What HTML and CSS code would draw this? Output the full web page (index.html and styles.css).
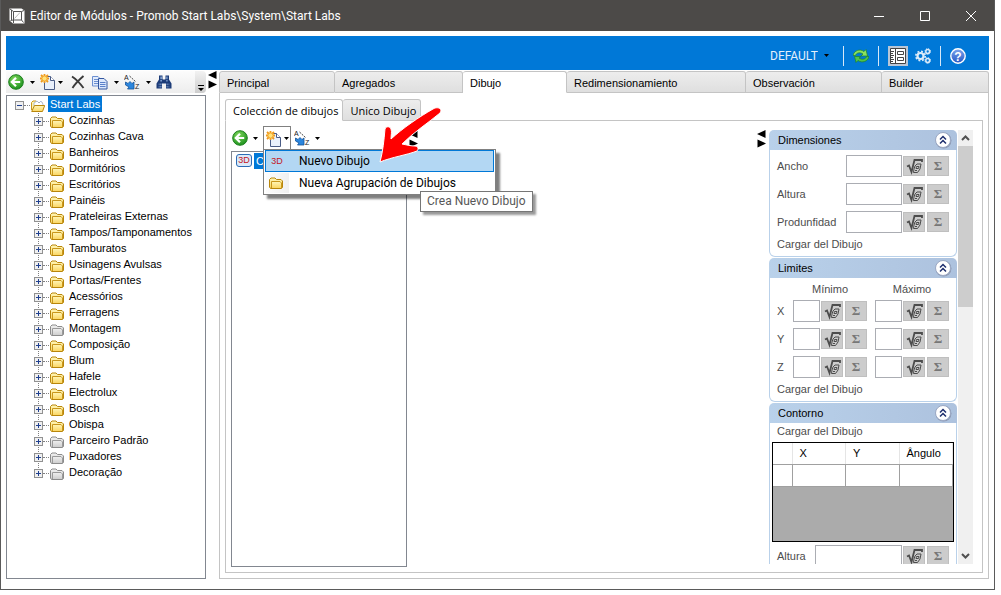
FILE: index.html
```html
<!DOCTYPE html>
<html lang="es">
<head>
    <meta charset="UTF-8">
    <meta name="viewport" content="width=device-width, initial-scale=1.0">
    <title>Editor de Módulos</title>
    <link rel="stylesheet" href="styles.css">
</head>
<body>
    <!-- Shared icons -->
    <svg class="sprite" aria-hidden="true">
        <defs>
            <linearGradient id="gold" x1="0" y1="0" x2="0" y2="1">
                <stop offset="0" stop-color="#fff6b8"/><stop offset="1" stop-color="#fbd765"/>
            </linearGradient>
            <linearGradient id="silver" x1="0" y1="0" x2="0" y2="1">
                <stop offset="0" stop-color="#f0f0f0"/><stop offset="1" stop-color="#cfcfcf"/>
            </linearGradient>
            <radialGradient id="green" cx="0.4" cy="0.3" r="0.7">
                <stop offset="0" stop-color="#7fd65a"/><stop offset="1" stop-color="#1f9420"/>
            </radialGradient>
            <linearGradient id="help-blue" x1="0" y1="0" x2="0" y2="1">
                <stop offset="0" stop-color="#7fa6ee"/><stop offset="1" stop-color="#2456c4"/>
            </linearGradient>
            <linearGradient id="lens" x1="0" y1="0" x2="1" y2="0">
                <stop offset="0" stop-color="#1d3c78"/><stop offset=".45" stop-color="#a9c8f3"/><stop offset="1" stop-color="#1d3c78"/>
            </linearGradient>
        </defs>
        <symbol id="folder" viewBox="0 0 14 12">
            <path d="M.5 10V2.500L2 1h4l1.500 1.500H12L13.500 4v6.500l-1 1h-11z" fill="url(#gold)" stroke="#b8860b"/>
            <path d="M2.500 11V4.500H11L12.500 6v5" fill="url(#gold)" stroke="#c9971c"/>
        </symbol>
        <symbol id="folder-gray" viewBox="0 0 14 12">
            <path d="M.5 10V2.500L2 1h4l1.500 1.500H12L13.500 4v6.500l-1 1h-11z" fill="url(#silver)" stroke="#8c8c8c"/>
            <path d="M2.500 11V4.500H11L12.500 6v5" fill="url(#silver)" stroke="#9a9a9a"/>
        </symbol>
        <symbol id="folder-open" viewBox="0 0 14 12">
            <path d="M.5 10V2.500L2 1h3l1.500 1.500H11V5" fill="#fff3b0" stroke="#c9971c"/>
            <path d="M3 3l3-2 2 2 2-2 2 3v2H3z" fill="#fff" stroke="#8fa4c8" stroke-width=".7"/>
            <path d="M.7 11.500L3.500 5.500h10.200L11.500 11.500z" fill="url(#gold)" stroke="#b8860b"/>
        </symbol>
        <symbol id="back" viewBox="0 0 16 16">
            <circle cx="8" cy="8" r="7.300" fill="url(#green)" stroke="#1c7f1c"/>
            <path d="M8 3.800L3.800 8 8 12.200M4.500 8H12.200" fill="none" stroke="#fff" stroke-width="2.200"/>
        </symbol>
        <symbol id="new" viewBox="0 0 16 16">
            <path d="M4.500 2.500h6l4 4v9h-10z" fill="#e9f0fb" stroke="#4a5c86"/>
            <path d="M10.500 2.500v4h4" fill="#fff" stroke="#4a5c86"/>
            <path d="M4.500 0v9M0 4.500h9M1 1l7 7M8 1L1 8" stroke="#f09a1a" stroke-width="1.800"/>
            <circle cx="4.500" cy="4.500" r="2.600" fill="#ffe27a" stroke="#f5a92c"/>
        </symbol>
        <symbol id="delete" viewBox="0 0 16 16">
            <path d="M2 2.500C6 5 10.500 10 13.500 14M13.500 2C10 5 5 10 2.500 14" fill="none" stroke="#3a3a3a" stroke-width="1.900"/>
        </symbol>
        <symbol id="copy" viewBox="0 0 16 16">
            <path d="M.5 2.500h5.500l2.500 2.500v7h-8z" fill="#e2ecfc" stroke="#6c8fd0"/>
            <path d="M2 5.500h4M2 7.500h4M2 9.500h4" stroke="#6c8fd0"/>
            <path d="M6.500 4.500h5.500l3 3v7.500H6.500z" fill="#dbe7fb" stroke="#33569f"/>
            <path d="M8 8.500h5.500M8 10.500h5.500M8 12.500h5.500" stroke="#5a80c9"/>
        </symbol>
        <symbol id="sort-arrow" viewBox="0 0 16 16">
            <path d="M5.500 2l6.500 6" stroke="#444" stroke-dasharray="2 1"/>
            <path d="M1.500 8L4 9.500l2-2 2 2 2-1.500v7H3.500L5 13 1.500 11z" fill="#2a86de" stroke="#14539a" stroke-width=".8"/>
        </symbol>
        <symbol id="find" viewBox="0 0 16 16">
            <path d="M3 1.500h3.500v4h3v-4H13v4l2.500 4v5H10V9.500H6v5H.5v-5l2.500-4z" fill="#1d3c78"/>
            <path d="M1.500 9.500h4v4h-4zM10.500 9.500h4v4h-4zM4 2.500h2v5H4zM10 2.500h2v5h-2z" fill="url(#lens)"/>
            <path d="M1 11.500h5M10 11.500h5M3.500 5.500h3M9.500 5.500h3" stroke="#1d3c78" stroke-width=".8"/>
        </symbol>
        <symbol id="caret" viewBox="0 0 5 3"><path d="M0 0h5L2.500 3z"/></symbol>
        <symbol id="split" viewBox="0 0 9 18"><path d="M8.500 0v8L0 4zM.5 9.500v8L9 13.500z"/></symbol>
        <symbol id="formula" viewBox="0 0 20 18">
            <path d="M3 9.500l2-1 2.500 6.500L10.500 3H18v2" fill="none" stroke="#4d4d4d" stroke-width="1.800"/>
            <path d="M11 9l2-2h4l-1 5-2.500 3.500H9.500l.5-3.500zM12.500 9.500h2.500l-.5 2H12zM11 13.500h2" fill="none" stroke="#4d4d4d"/>
        </symbol>
        <symbol id="collapse" viewBox="0 0 18 18">
            <circle cx="9.500" cy="9.500" r="8" fill="#8e9ab3"/>
            <circle cx="9" cy="9" r="7.500" fill="#fff" stroke="#9aa8c4"/>
            <path d="M6 8.500l3-3 3 3M6 12.500l3-3 3 3" fill="none" stroke="#1f2f6e" stroke-width="1.500"/>
        </symbol>
    </svg>

    <div class="window">
        <header class="titlebar">
            <svg class="app-icon" viewBox="0 0 16 16">
                <path d="M.5.5h12l3 2v13H4l-3.500-3z" fill="#fff"/>
                <path d="M4.500 3.500h8V12h-8zM1 1l3.500 2.500M4.500 12v3M12.500 3.500L15 2.500M4.500 12L1.500 12.500M12.500 12l2 2.500M2.500 2v10" fill="none" stroke="#555"/>
                <path d="M5.500 10.500l5.500-6" stroke="#999" stroke-width=".7"/>
            </svg>
            <h1>Editor de Módulos - Promob Start Labs\System\Start Labs</h1>
            <button class="win-btn" aria-label="Minimizar"><svg viewBox="0 0 12 12"><path d="M1 6.500h10"/></svg></button>
            <button class="win-btn" aria-label="Maximizar"><svg viewBox="0 0 12 12"><path d="M1.500 1.500h9v9h-9z"/></svg></button>
            <button class="win-btn" aria-label="Cerrar"><svg viewBox="0 0 12 12"><path d="M1 1l10 10M11 1L1 11"/></svg></button>
        </header>

        <div class="ribbon">
            <label class="profile">
                <select aria-label="Perfil"><option>DEFAULT</option></select>
                <svg class="caret"><use href="#caret"/></svg>
            </label>
            <span class="sep"></span>
            <button class="icon-btn" aria-label="Actualizar">
                <svg viewBox="0 0 16 16">
                    <path d="M0 7.500C1 2.500 7 .5 11 3.500L13 1.500 14.500 8H8l2-2C7 4 3.500 4.500 2.500 7.500z" fill="#8be05f" stroke="#1c8427" stroke-width=".7"/>
                    <path d="M16 8.500C15 13.500 9 15.500 5 12.500L3 14.500 1.500 8.500H8l-2 1.500c3 2 6.500 1.500 7.500-1.500z" fill="#4fc24a" stroke="#1c8427" stroke-width=".7"/>
                </svg>
            </button>
            <span class="sep"></span>
            <button class="icon-btn active" aria-label="Propiedades">
                <svg viewBox="0 0 16 16">
                    <path d="M.5.5h15v15H.5z" fill="#fff" stroke="#444"/>
                    <path d="M5.500 1v14M1 3.500h3M1 5.500h2M1 7.500h3M1 9.500h2M1 11.500h3M1 13.500h2M7.500 3.500h6v3h-6zM7.500 9.500h6v3h-6z" fill="none" stroke="#444"/>
                </svg>
            </button>
            <button class="icon-btn" aria-label="Configuración">
                <svg viewBox="0 0 16 16" fill="none" stroke="#dcebf9">
                    <circle cx="5.500" cy="8" r="3" stroke-width="2.200"/>
                    <circle cx="5.500" cy="8" r="4.700" stroke-width="1.700" stroke-dasharray="1.900 1.790"/>
                    <circle cx="12.700" cy="3.500" r="1.900" stroke-width="1.500"/>
                    <circle cx="12.700" cy="3.500" r="2.800" stroke-dasharray="1.200 1"/>
                    <circle cx="12.700" cy="12.500" r="1.900" stroke-width="1.500"/>
                    <circle cx="12.700" cy="12.500" r="2.800" stroke-dasharray="1.200 1"/>
                </svg>
            </button>
            <span class="sep"></span>
            <button class="icon-btn" aria-label="Ayuda">
                <svg viewBox="0 0 16 16">
                    <circle cx="8" cy="8" r="7.200" fill="url(#help-blue)" stroke="#fff" stroke-width="1.400"/>
                    <text class="question" x="8" y="12.500">?</text>
                </svg>
            </button>
        </div>

        <div class="workspace">
            <aside class="library">
                <div class="toolbar shaded">
                    <button class="tool" aria-label="Volver"><svg><use href="#back"/></svg></button>
                    <button class="drop" aria-label="Opciones"><svg class="caret"><use href="#caret"/></svg></button>
                    <button class="tool" aria-label="Nuevo"><svg><use href="#new"/></svg></button>
                    <button class="drop narrow" aria-label="Opciones"><svg class="caret"><use href="#caret"/></svg></button>
                    <button class="tool spaced" aria-label="Eliminar"><svg><use href="#delete"/></svg></button>
                    <button class="tool spaced" aria-label="Copiar"><svg><use href="#copy"/></svg></button>
                    <button class="drop" aria-label="Opciones"><svg class="caret"><use href="#caret"/></svg></button>
                    <button class="tool" aria-label="Ordenar"><svg viewBox="0 0 16 16"><use href="#sort-arrow"/><text class="tiny" x="0" y="6">A</text><text class="tiny" x="11" y="15">Z</text></svg></button>
                    <button class="drop" aria-label="Opciones"><svg class="caret"><use href="#caret"/></svg></button>
                    <button class="tool" aria-label="Buscar"><svg><use href="#find"/></svg></button>
                    <button class="overflow" aria-label="Más"><svg viewBox="0 0 6 6"><path d="M0 0h6v1H0zM0 3h6L3 6z"/></svg></button>
                </div>
                <div class="tree">
                    <div class="node root">
                        <button class="toggle open" aria-label="Contraer"></button><svg class="folder"><use href="#folder-open"/></svg><span class="selected">Start Labs</span>
                    </div>
                    <ul>
                        <li class="node"><button class="toggle" aria-label="Expandir"></button><svg class="folder"><use href="#folder"/></svg><span>Cozinhas</span></li>
                        <li class="node"><button class="toggle" aria-label="Expandir"></button><svg class="folder"><use href="#folder"/></svg><span>Cozinhas Cava</span></li>
                        <li class="node"><button class="toggle" aria-label="Expandir"></button><svg class="folder"><use href="#folder"/></svg><span>Banheiros</span></li>
                        <li class="node"><button class="toggle" aria-label="Expandir"></button><svg class="folder"><use href="#folder"/></svg><span>Dormitórios</span></li>
                        <li class="node"><button class="toggle" aria-label="Expandir"></button><svg class="folder"><use href="#folder"/></svg><span>Escritórios</span></li>
                        <li class="node"><button class="toggle" aria-label="Expandir"></button><svg class="folder"><use href="#folder"/></svg><span>Painéis</span></li>
                        <li class="node"><button class="toggle" aria-label="Expandir"></button><svg class="folder"><use href="#folder"/></svg><span>Prateleiras Externas</span></li>
                        <li class="node"><button class="toggle" aria-label="Expandir"></button><svg class="folder"><use href="#folder"/></svg><span>Tampos/Tamponamentos</span></li>
                        <li class="node"><button class="toggle" aria-label="Expandir"></button><svg class="folder"><use href="#folder"/></svg><span>Tamburatos</span></li>
                        <li class="node"><button class="toggle" aria-label="Expandir"></button><svg class="folder"><use href="#folder"/></svg><span>Usinagens Avulsas</span></li>
                        <li class="node"><button class="toggle" aria-label="Expandir"></button><svg class="folder"><use href="#folder"/></svg><span>Portas/Frentes</span></li>
                        <li class="node"><button class="toggle" aria-label="Expandir"></button><svg class="folder"><use href="#folder"/></svg><span>Acessórios</span></li>
                        <li class="node"><button class="toggle" aria-label="Expandir"></button><svg class="folder"><use href="#folder"/></svg><span>Ferragens</span></li>
                        <li class="node"><button class="toggle" aria-label="Expandir"></button><svg class="folder"><use href="#folder-gray"/></svg><span>Montagem</span></li>
                        <li class="node"><button class="toggle" aria-label="Expandir"></button><svg class="folder"><use href="#folder"/></svg><span>Composição</span></li>
                        <li class="node"><button class="toggle" aria-label="Expandir"></button><svg class="folder"><use href="#folder"/></svg><span>Blum</span></li>
                        <li class="node"><button class="toggle" aria-label="Expandir"></button><svg class="folder"><use href="#folder"/></svg><span>Hafele</span></li>
                        <li class="node"><button class="toggle" aria-label="Expandir"></button><svg class="folder"><use href="#folder"/></svg><span>Electrolux</span></li>
                        <li class="node"><button class="toggle" aria-label="Expandir"></button><svg class="folder"><use href="#folder"/></svg><span>Bosch</span></li>
                        <li class="node"><button class="toggle" aria-label="Expandir"></button><svg class="folder"><use href="#folder"/></svg><span>Obispa</span></li>
                        <li class="node"><button class="toggle" aria-label="Expandir"></button><svg class="folder"><use href="#folder-gray"/></svg><span>Parceiro Padrão</span></li>
                        <li class="node"><button class="toggle" aria-label="Expandir"></button><svg class="folder"><use href="#folder-gray"/></svg><span>Puxadores</span></li>
                        <li class="node"><button class="toggle" aria-label="Expandir"></button><svg class="folder"><use href="#folder-gray"/></svg><span>Decoração</span></li>
                    </ul>
                </div>
            </aside>

            <div class="splitter"><svg><use href="#split"/></svg></div>

            <main class="editor">
                <nav class="tabs">
                    <button class="tab">Principal</button>
                    <button class="tab">Agregados</button>
                    <button class="tab current">Dibujo</button>
                    <button class="tab">Redimensionamiento</button>
                    <button class="tab">Observación</button>
                    <button class="tab">Builder</button>
                </nav>
                <div class="page">
                    <nav class="subtabs">
                        <button class="tab current">Colección de dibujos</button>
                        <button class="tab">Unico Dibujo</button>
                    </nav>
                    <div class="subpage">
                        <section class="drawings">
                            <div class="toolbar">
                                <button class="tool" aria-label="Volver"><svg><use href="#back"/></svg></button>
                                <button class="drop" aria-label="Opciones"><svg class="caret"><use href="#caret"/></svg></button>
                                <div class="menu-anchor">
                                    <button class="menu-btn" aria-label="Nuevo">
                                        <svg class="icon"><use href="#new"/></svg>
                                        <svg class="caret"><use href="#caret"/></svg>
                                    </button>
                                    <div class="menu">
                                        <button class="menu-item hover"><span class="three-d">3D</span>Nuevo Dibujo</button>
                                        <button class="menu-item"><svg class="folder"><use href="#folder"/></svg>Nueva Agrupación de Dibujos</button>
                                        <div class="tooltip">Crea Nuevo Dibujo</div>
                                    </div>
                                    <svg class="pointer" viewBox="0 0 62 56">
                                        <path d="M54 2C40 10 24 21 12 32C12 28 13 25 12 22C11 19 7 19 6 22C5 33 4 44 1 55C13 50 28 48 38 44C40 42 39 39 36 39C32 39 28 38 23 37C35 25 49 16 61 6C64 2 59-1 54 2z" fill="#f00" stroke="#fff"/>
                                    </svg>
                                </div>
                                <button class="tool sort" aria-label="Ordenar"><svg viewBox="0 0 16 16"><use href="#sort-arrow"/><text class="tiny" x="0" y="6">A</text><text class="tiny" x="11" y="15">Z</text></svg></button>
                                <button class="drop" aria-label="Opciones"><svg class="caret"><use href="#caret"/></svg></button>
                            </div>
                            <div class="list">
                                <div class="list-row"><span class="three-d badge">3D</span><span class="selected">C</span></div>
                            </div>
                        </section>
                        <div class="splitter"><svg><use href="#split"/></svg></div>
                        <div class="canvas"></div>
                        <div class="splitter"><svg><use href="#split"/></svg></div>

                        <section class="properties">
                            <div class="panel">
                                <h2>Dimensiones<button class="collapse" aria-label="Contraer"><svg><use href="#collapse"/></svg></button></h2>
                                <div class="panel-body">
                                    <div class="field"><label for="ancho">Ancho</label><input id="ancho"><button class="fx" aria-label="Fórmula"><svg><use href="#formula"/></svg></button><button class="fx sum">Σ</button></div>
                                    <div class="field"><label for="altura">Altura</label><input id="altura"><button class="fx" aria-label="Fórmula"><svg><use href="#formula"/></svg></button><button class="fx sum">Σ</button></div>
                                    <div class="field"><label for="prof">Produnfidad</label><input id="prof"><button class="fx" aria-label="Fórmula"><svg><use href="#formula"/></svg></button><button class="fx sum">Σ</button></div>
                                    <a class="load" href="#">Cargar del Dibujo</a>
                                </div>
                            </div>

                            <div class="panel">
                                <h2>Limites<button class="collapse" aria-label="Contraer"><svg><use href="#collapse"/></svg></button></h2>
                                <div class="panel-body">
                                    <div class="limits-head"><span>Mínimo</span><span>Máximo</span></div>
                                    <div class="limits">
                                        <label for="x-min">X</label>
                                        <div class="cell"><input id="x-min"><button class="fx" aria-label="Fórmula"><svg><use href="#formula"/></svg></button><button class="fx sum">Σ</button></div>
                                        <div class="cell"><input aria-label="X máximo"><button class="fx" aria-label="Fórmula"><svg><use href="#formula"/></svg></button><button class="fx sum">Σ</button></div>
                                        <label for="y-min">Y</label>
                                        <div class="cell"><input id="y-min"><button class="fx" aria-label="Fórmula"><svg><use href="#formula"/></svg></button><button class="fx sum">Σ</button></div>
                                        <div class="cell"><input aria-label="Y máximo"><button class="fx" aria-label="Fórmula"><svg><use href="#formula"/></svg></button><button class="fx sum">Σ</button></div>
                                        <label for="z-min">Z</label>
                                        <div class="cell"><input id="z-min"><button class="fx" aria-label="Fórmula"><svg><use href="#formula"/></svg></button><button class="fx sum">Σ</button></div>
                                        <div class="cell"><input aria-label="Z máximo"><button class="fx" aria-label="Fórmula"><svg><use href="#formula"/></svg></button><button class="fx sum">Σ</button></div>
                                    </div>
                                    <a class="load" href="#">Cargar del Dibujo</a>
                                </div>
                            </div>

                            <div class="panel">
                                <h2>Contorno<button class="collapse" aria-label="Contraer"><svg><use href="#collapse"/></svg></button></h2>
                                <div class="panel-body contour">
                                    <a class="load" href="#">Cargar del Dibujo</a>
                                    <div class="grid-box">
                                        <table>
                                            <thead><tr><th class="handle"></th><th>X</th><th>Y</th><th>Ângulo</th></tr></thead>
                                            <tbody><tr><td></td><td></td><td></td><td></td></tr></tbody>
                                        </table>
                                    </div>
                                    <div class="field wide"><label for="contorno-altura">Altura</label><input id="contorno-altura"><button class="fx" aria-label="Fórmula"><svg><use href="#formula"/></svg></button><button class="fx sum">Σ</button></div>
                                </div>
                            </div>
                        </section>

                        <div class="scrollbar">
                            <svg viewBox="0 0 9 6"><path d="M1 5l3.500-3.500L8 5"/></svg>
                            <div class="thumb"></div>
                            <svg viewBox="0 0 9 6"><path d="M1 1l3.500 3.500L8 1"/></svg>
                        </div>
                    </div>
                </div>
            </main>
        </div>
    </div>
</body>
</html>
```

FILE: styles.css
```css
* {
    margin: 0;
    padding: 0;
    box-sizing: border-box;
}
body {
    height: 100vh;
    padding: 0 6px 5px 0;
    background: #fff;
    color: #000;
    font: 11px/16px "Liberation Sans", Arial, sans-serif;
    overflow: hidden;
}
button, input, select {
    font: inherit;
    color: inherit;
    border: 0;
    background: none;
}
button {
    display: flex;
    align-items: center;
    justify-content: center;
}
svg {
    display: block;
    flex: none;
}
.sprite {
    position: absolute;
    width: 0;
    height: 0;
}
.tiny {
    font: 7px "Liberation Sans", Arial, sans-serif;
    fill: #222;
}
.question {
    font: bold 12px "Liberation Sans", Arial, sans-serif;
    fill: #fff;
    text-anchor: middle;
}
.caret {
    width: 5px;
    height: 3px;
}
.icon {
    width: 16px;
    height: 16px;
}
.folder {
    width: 14px;
    height: 12px;
}
.selected {
    background: #0078d7;
    color: #fff;
}

/* Window frame */
.window {
    height: 100%;
    display: flex;
    flex-direction: column;
    border: 1px solid #5a5a5a;
    border-top: 0;
}
.titlebar {
    height: 31px;
    display: flex;
    align-items: center;
    padding-left: 8px;
    background: #4c4a48;
    color: #fff;
}
.titlebar h1 {
    flex: 1;
    margin-left: 5px;
    font: 12px/16px Roboto, "Open Sans", sans-serif;
}
.app-icon {
    width: 16px;
    height: 16px;
}
.win-btn {
    width: 46px;
    height: 31px;
}
.win-btn svg {
    width: 12px;
    height: 12px;
    fill: none;
    stroke: #fff;
}
.ribbon {
    height: 34px;
    margin: 5px 5px 0;
    padding: 5px 23px 0 0;
    display: flex;
    align-items: center;
    justify-content: flex-end;
    background: #0078d7;
}
.profile {
    display: flex;
    align-items: center;
    gap: 6px;
    margin-right: 5px;
}
.profile select {
    appearance: none;
    color: #e3f0fb;
    font: 12px/16px Roboto, "Open Sans", sans-serif;
}
.sep {
    width: 1px;
    height: 20px;
    margin: 0 9px;
    background: #d6e8f8;
}
.icon-btn svg {
    width: 16px;
    height: 16px;
}
.icon-btn.active {
    padding: 2px;
    margin-right: 7px;
    background: #b9c6d6;
}

/* Left library */
.workspace {
    flex: 1;
    min-height: 0;
    display: grid;
    grid-template-columns: 200px 13px minmax(0, 1fr);
    padding: 1px 5px 10px;
}
.library {
    display: flex;
    flex-direction: column;
    min-height: 0;
}
.toolbar {
    height: 22px;
    display: flex;
    align-items: center;
}
.toolbar.shaded {
    padding-left: 2px;
    margin-bottom: 2px;
    border-radius: 0 4px 4px 0;
    background: linear-gradient(#fcfcfc, #ededed);
}
.tool svg {
    width: 16px;
    height: 16px;
}
.tool.spaced {
    margin-left: 6px;
}
.tool.sort {
    margin-left: 3px;
}
.drop {
    width: 16px;
    height: 16px;
}
.drop.narrow {
    width: 8px;
}
.overflow {
    width: 11px;
    height: 22px;
    margin-left: auto;
    padding-top: 12px;
    border-radius: 0 4px 4px 0;
    background: linear-gradient(#f2f2f2, #cdcdcd);
}
.overflow svg {
    width: 6px;
    height: 6px;
}
.tree {
    flex: 1;
    min-height: 0;
    padding-left: 8px;
    border: 1px solid #828790;
    overflow: hidden;
}
.tree ul {
    list-style: none;
    margin-left: 19px;
    /* dotted connector running through the toggles */
    background: repeating-linear-gradient(#fff 0 1px, #808080 1px 2px) 4px 0 / 1px calc(100% - 8px) no-repeat;
}
.node {
    height: 16px;
    display: flex;
    align-items: center;
}
.node .folder {
    margin: 3px 3px 0 7px;
    overflow: visible;
}
.node span {
    padding: 0 2px;
}
.toggle {
    position: relative;
    width: 9px;
    height: 9px;
    margin-top: 3px;
    border: 1px solid #919191;
    background: linear-gradient(#1f3f8f, #1f3f8f) center / 5px 1px no-repeat,
        linear-gradient(#1f3f8f, #1f3f8f) center / 1px 5px no-repeat, #f0f0f0;
}
.toggle.open {
    background: linear-gradient(#1f3f8f, #1f3f8f) center / 5px 1px no-repeat, #f0f0f0;
}
.toggle::after {
    content: "";
    position: absolute;
    left: 8px;
    top: 3px;
    width: 6px;
    border-top: 1px dotted #808080;
}
.splitter {
    padding: 0 2px;
}
.splitter svg {
    width: 9px;
    height: 18px;
}

/* Tabs */
.editor {
    display: flex;
    flex-direction: column;
    min-width: 0;
    min-height: 0;
}
.tabs {
    display: grid;
    grid-template-columns: 116fr 128fr 104fr 179fr 136fr 107fr;
    height: 22px;
}
.tab {
    justify-content: flex-start;
    padding: 2px 7px 0;
    border: 1px solid #c4c4c4;
    border-left-width: 0;
    border-radius: 3px 3px 0 0;
    background: linear-gradient(#ededed, #dfdfdf);
}
.tab:first-child {
    border-left-width: 1px;
}
.tab.current {
    border-bottom-color: #fff;
    background: #fff;
}
.page {
    flex: 1;
    min-height: 0;
    display: flex;
    flex-direction: column;
    padding: 6px 5px 5px;
    border: 1px solid #c4c4c4;
    border-top: 0;
}
.subtabs {
    display: flex;
    height: 22px;
    margin-bottom: -1px;
    z-index: 1;
}
.subtabs .tab {
    padding-right: 4px;
    font: 11px/16px "Open Sans", "Noto Sans", sans-serif;
}
.subpage {
    flex: 1;
    min-height: 0;
    display: grid;
    grid-template-columns: 176px 13px minmax(0, 1fr) 14px 188px 16px;
    padding: 5px 9px 5px 5px;
    border: 1px solid #c4c4c4;
}
.subpage > .splitter {
    padding-top: 4px;
}

/* Drawing list */
.drawings {
    display: flex;
    flex-direction: column;
    min-height: 0;
}
.drawings .toolbar {
    height: 24px;
    padding-left: 1px;
    margin-bottom: 1px;
}
.drawings .drop {
    width: 15px;
}
.list {
    flex: 1;
    padding: 1px 4px;
    border: 1px solid #828790;
}
.list-row {
    display: flex;
    gap: 2px;
}
.three-d {
    width: 16px;
    color: #c4161c;
    font: 9px/12px "Liberation Sans", Arial, sans-serif;
    text-align: center;
}
.badge {
    height: 13px;
    margin-top: 1px;
    line-height: 11px;
    border: 1px solid #2c6cb5;
    border-radius: 3px;
    background: #dbe9f9;
}
.list-row .selected {
    padding: 0 2px;
}
.menu-anchor {
    position: relative;
    height: 24px;
}
.menu-btn {
    height: 24px;
    width: 28px;
    gap: 2px;
    border: 1px solid #808080;
    border-bottom: 0;
    background: #fff;
}
.menu {
    position: absolute;
    z-index: 2;
    top: 23px;
    left: 0;
    width: 233px;
    padding: 0 1px;
    border: 1px solid #808080;
    background: #fff;
    box-shadow: 4px 4px 2px rgba(0, 0, 0, 0.5);
    font: 12px/16px Roboto, "Open Sans", sans-serif;
}
.menu-item {
    width: 100%;
    height: 22px;
    justify-content: flex-start;
    gap: 14px;
    padding-left: 3px;
    border: 1px solid transparent;
    background: linear-gradient(90deg, #fcfcfc, #f0f0f0) left / 23px 100% no-repeat;
}
.menu-item .folder {
    margin-right: 2px;
}
.menu-item.hover {
    border-color: #0078d7;
    background: #b3d7f3;
}
.tooltip {
    position: absolute;
    top: 41px;
    left: 156px;
    padding: 1px 6px 2px;
    border: 1px solid #767676;
    background: #fff;
    color: #575757;
    box-shadow: 3px 3px 2px rgba(0, 0, 0, 0.4);
    white-space: nowrap;
}
.pointer {
    position: absolute;
    z-index: 3;
    top: -19px;
    left: 116px;
    width: 62px;
    height: 56px;
    overflow: visible;
}

/* Property panels */
.properties {
    margin-top: 4px;
    min-height: 0;
    margin-bottom: 3px;
    overflow: hidden;
    color: #4d4d4d;
}
.panel {
    margin-bottom: 1px;
}
.panel h2 {
    display: flex;
    align-items: center;
    justify-content: space-between;
    height: 20px;
    padding: 0 5px 0 9px;
    border-radius: 5px 5px 0 0;
    background: linear-gradient(90deg, #b9d1ea, #adc2de);
    color: #000;
    font-size: 11px;
    font-weight: normal;
}
.collapse svg {
    width: 18px;
    height: 18px;
}
.panel-body {
    padding: 5px 7px 4px;
    border: 1px solid #b9d1ea;
    border-top: 0;
    border-radius: 0 0 6px 6px;
}
.field, .cell {
    display: flex;
    align-items: center;
    min-width: 0;
}
.field {
    margin-bottom: 6px;
}
.field:last-of-type {
    margin-bottom: 3px;
}
.field label {
    width: 69px;
}
input {
    flex: 1;
    min-width: 0;
    height: 22px;
    margin-right: 1px;
    border: 1px solid #abadb3;
    background: #fff;
}
.fx {
    flex: none;
    width: 22px;
    height: 20px;
    border: 1px solid #bfbfbf;
    background: #ccc;
}
.fx svg {
    width: 20px;
    height: 18px;
}
.fx.sum {
    margin-left: 2px;
    color: #777;
    font: bold 13px/16px "Liberation Serif", serif;
}
.load {
    display: block;
    color: inherit;
    text-decoration: none;
}
.limits-head, .limits {
    display: grid;
    column-gap: 8px;
}
.limits-head {
    grid-template-columns: 1fr 1fr;
    margin: -2px 0 3px 16px;
    text-align: center;
}
.limits {
    grid-template-columns: 8px minmax(0, 1fr) minmax(0, 1fr);
    row-gap: 6px;
    align-items: center;
    margin-bottom: 3px;
}
.contour {
    padding: 0 2px 4px;
}
.contour .load {
    padding-left: 5px;
}
.grid-box {
    height: 100px;
    margin: 3px 0;
    border: 1px solid #000;
    background: #ababab;
}
.field.wide {
    padding: 0 5px;
}
.field.wide label {
    width: 38px;
}
table {
    width: 100%;
    table-layout: fixed;
    border-collapse: collapse;
    color: #000;
}
th, td {
    height: 22px;
    padding: 0 7px;
    border-right: 1px solid #a0a0a0;
    border-bottom: 1px solid #a0a0a0;
    background: #fff;
    font-weight: normal;
    line-height: 14px;
    text-align: left;
}
th {
    height: 21px;
    border-right-color: #e5e5e5;
}
.handle {
    width: 19px;
}

/* Scrollbar */
.scrollbar {
    display: flex;
    flex-direction: column;
    align-items: center;
    justify-content: space-between;
    margin: 4px 0 3px 1px;
    background: #f0f0f0;
}
.scrollbar svg {
    width: 9px;
    height: 6px;
    margin: 5px 0;
    fill: none;
    stroke: #505050;
    stroke-width: 2;
}
.thumb {
    width: 100%;
    height: 37%;
    margin-bottom: auto;
    background: #cdcdcd;
}
```
